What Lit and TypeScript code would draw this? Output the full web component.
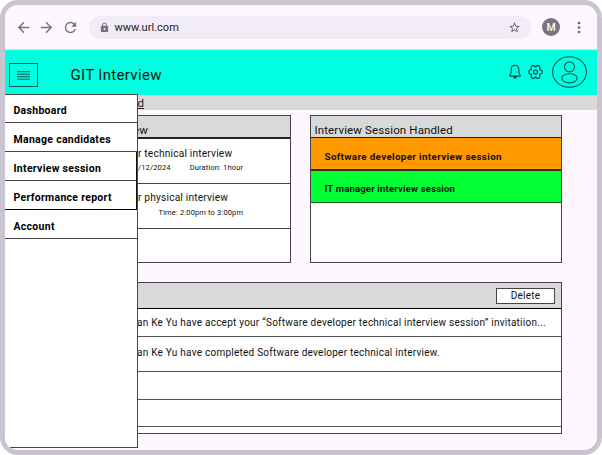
import { LitElement, html, css } from "lit";
import { customElement } from "lit/decorators.js";

@customElement("browser-bar")
class BrowserBar extends LitElement {
  static styles = css`
    :host { display: flex; height: 45px; box-sizing: border-box; align-items: center; background: #fef7ff; border-bottom: 1px solid #d5e6ea; }
    .nav { display: flex; width: 84px; box-sizing: border-box; padding-left: 10px; gap: 6.4px; }
    .nav svg { display: block; }
    .pill { display: flex; align-items: center; width: 442px; height: 23px; border-radius: 12px; background: #f2ecf7; }
    .lock { margin-left: 9.5px; }
    .url { flex: 1; margin-left: 5px; font-size: 11px; letter-spacing: 0.02px; color: #1d1b20; }
    .star { margin-right: 10px; }
    .avatar { display: flex; align-items: center; justify-content: center; width: 18px; height: 18px; margin-left: 11px; border-radius: 50%; background: #79747e; color: #fff; font-size: 10.5px; font-weight: 500; }
    .dots { margin-left: 16.5px; }
  `;
  render() {
    return html`
      <div class="nav">
        <svg width="17" height="17" viewBox="0 0 24 24" fill="#77717b"><path d="M20 11H7.83l5.59-5.59L12 4l-8 8 8 8 1.41-1.41L7.83 13H20v-2z" /></svg>
        <svg width="17" height="17" viewBox="0 0 24 24" fill="#77717b"><path d="M12 4l-1.41 1.41L16.17 11H4v2h12.17l-5.58 5.59L12 20l8-8z" /></svg>
        <svg width="17" height="17" viewBox="0 0 24 24" fill="#77717b"><path d="M17.65 6.35A7.96 7.96 0 0 0 12 4a8 8 0 1 0 7.73 10h-2.08A6 6 0 1 1 12 6c1.66 0 3.14.69 4.22 1.78L13 11h7V4l-2.35 2.35z" /></svg>
      </div>
      <div class="pill">
        <svg class="lock" width="11" height="11" viewBox="0 0 24 24" fill="#79747e"><path d="M18 8h-1V6A5 5 0 0 0 7 6v2H6a2 2 0 0 0-2 2v10c0 1.1.9 2 2 2h12a2 2 0 0 0 2-2V10a2 2 0 0 0-2-2zM9 6a3 3 0 0 1 6 0v2H9V6zm3 11a2 2 0 1 1 0-4 2 2 0 0 1 0 4z" /></svg>
        <span class="url">www.url.com</span>
        <svg class="star" width="13" height="13" viewBox="0 0 24 24" fill="#66616a"><path d="M22 9.24l-7.19-.62L12 2 9.19 8.63 2 9.24l5.46 4.73L5.82 21 12 17.27 18.18 21l-1.63-7.03L22 9.24zM12 15.4l-3.76 2.27 1-4.28-3.32-2.88 4.38-.38L12 6.1l1.71 4.04 4.38.38-3.32 2.88 1 4.28L12 15.4z" /></svg>
      </div>
      <span class="avatar">M</span>
      <svg class="dots" width="4" height="13" viewBox="0 0 4 13" fill="#66616a"><circle cx="2" cy="2" r="1.3" /><circle cx="2" cy="6.5" r="1.3" /><circle cx="2" cy="11" r="1.3" /></svg>
    `;
  }
}

@customElement("app-header")
class AppHeader extends LitElement {
  static styles = css`
    :host { display: flex; height: 46px; box-sizing: border-box; align-items: flex-start; background: #00ffe1; border-bottom: 1px solid #bfdcd8; }
    .burger { display: flex; align-items: center; justify-content: center; width: 29px; height: 24px; box-sizing: border-box; margin: 13px 0 0 4px; border: 1px solid #085a54; }
    .title { flex: 1; margin: 16px 0 0 32.5px; font-size: 15px; line-height: 18px; letter-spacing: 0.33px; color: #061413; }
    .bell { margin: 14px 1px 0 0; }
    .gear { margin: 14px 0 0 6px; }
    .user { margin: 6px 10px 0 9px; }
    svg { display: block; }
  `;
  render() {
    return html`
      <div class="burger">
        <svg width="13" height="9" viewBox="0 0 13 9" stroke="#085a54" stroke-width="1.1"><path d="M0 .8H13M0 3.2H13M0 5.7H13M0 8.2H13" /></svg>
      </div>
      <div class="title">GIT Interview</div>
      <svg class="bell" width="12" height="16" viewBox="0 0 12 16" fill="none" stroke="#064742" stroke-width="1.1" stroke-linejoin="round"><path d="M6 1.3C3.6 1.3 2.2 3 2.2 5.3V8.6L.8 11.2V12.1H11.2V11.2L9.8 8.6V5.3C9.8 3 8.4 1.3 6 1.3Z" /><path d="M4.4 12.4Q6 15.8 7.6 12.4Z" fill="#064742" /></svg>
      <svg class="gear" width="15" height="16" viewBox="0 0 15 16" fill="none" stroke="#064742" stroke-width="1.1" stroke-linejoin="round"><path d="M4.3 1.6H6L7.5 3 9 1.6H10.7L12 3.5 11.5 5.3 14.1 6.8V9.2L11.5 10.5 12 12.5 10.7 14.4H9L7.5 13 6 14.4H4.3L3 12.5 3.5 10.5 .9 9.2V6.8L3.5 5.3 3 3.5Z" /><circle cx="7.5" cy="8" r="2" /></svg>
      <svg class="user" width="35" height="32" viewBox="0 0 35 32" fill="none" stroke="#06544e" stroke-width="1.1"><ellipse cx="17.5" cy="16" rx="16.9" ry="15.3" /><circle cx="17.5" cy="10.9" r="5" /><ellipse cx="17.5" cy="22.3" rx="7.7" ry="4.6" /></svg>
    `;
  }
}

@customElement("nav-drawer")
class NavDrawer extends LitElement {
  static styles = css`
    :host { display: block; box-sizing: border-box; background: #fff; border: 1px solid #444; border-left: 0; }
    .item { display: flex; align-items: center; height: 29px; box-sizing: border-box; padding: 5px 0 0 8.5px; border-bottom: 1px solid #444; font-size: 10.5px; font-weight: 700; letter-spacing: 0.29px; white-space: nowrap; color: #000; }
    .first { height: 28px; padding-top: 4px; }
    .thick { border-right: 1px solid #111; }
    .dark { border-bottom-color: #000; }
  `;
  render() {
    return html`
      <div class="item first">Dashboard</div>
      <div class="item">Manage candidates</div>
      <div class="item thick">Interview session</div>
      <div class="item thick dark">Performance report</div>
      <div class="item">Account</div>
    `;
  }
}

@customElement("app-root")
class AppRoot extends LitElement {
  static styles = css`
    :host { display: block; width: 602px; height: 455px; background: #fff; font-family: Roboto, sans-serif; }
    .frame { position: relative; display: flex; flex-direction: column; width: 602px; height: 455px; box-sizing: border-box; border: 5px solid #cac4d0; border-radius: 18px; overflow: hidden; background: #fef7ff; }
    .drawer { position: absolute; left: 0; top: 89px; width: 133px; height: 354px; }
    .strip { height: 14px; box-sizing: border-box; padding-left: 132.5px; background: #d9d9d9; font-size: 11.5px; line-height: 15px; color: #222; text-decoration: underline; }
    .panels { display: flex; gap: 19px; margin: 5px 35px 0 132px; height: 148px; }
    .panel { box-sizing: border-box; border: 1px solid #444; background: #fff; color: #111; white-space: nowrap; }
    .panel.left { width: 154px; border-left: 0; }
    .panel.right { width: 252px; }
    .head { display: flex; align-items: flex-end; height: 23px; box-sizing: border-box; background: #d9d9d9; border-bottom: 2px solid #222; font-size: 11.5px; line-height: 14px; letter-spacing: 0.12px; }
    .left .head span { margin-left: -4px; }
    .right .head { height: 22px; padding-left: 3.5px; border-bottom-width: 1px; }
    .slot { display: flex; flex-direction: column; height: 45px; box-sizing: border-box; border-bottom: 1px solid #444; padding: 8.5px 0 0 1px; gap: 3px; }
    .slot.second { padding-top: 7.5px; gap: 4px; }
    .name { font-size: 10.2px; line-height: 12px; letter-spacing: 0.18px; }
    .meta { display: flex; font-size: 7.5px; line-height: 9px; letter-spacing: 0.15px; gap: 19px; }
    .time { padding-left: 20.5px; }
    .session { display: flex; align-items: center; box-sizing: border-box; padding: 5px 0 0 13.5px; height: 33px; font-size: 9.8px; font-weight: 700; letter-spacing: 0.35px; color: #111; }
    .orange { background: #ff9900; border-bottom: 2px solid #3b2c10; }
    .green { height: 32px; font-size: 9.5px; letter-spacing: 0.19px; padding-top: 4px; background: #00ff33; border-bottom: 1px solid #145c22; }
    .inbox { width: 425px; height: 152px; margin: 19px 0 0 132px; border-left: 0; }
    .bar { display: flex; justify-content: flex-end; align-items: flex-start; height: 26px; box-sizing: border-box; padding: 5px 6px 0 0; background: #d9d9d9; border-bottom: 1px solid #000; }
    .delete { width: 59px; height: 16px; box-sizing: border-box; padding: 0; border: 1px solid #444; background: #fff; font: 10px/14px Roboto, sans-serif; letter-spacing: 0.25px; color: #111; }
    .msg { height: 28px; box-sizing: border-box; border-bottom: 1px solid #555; padding-top: 8px; font-size: 10px; line-height: 12px; letter-spacing: 0.24px; }
    .tall { height: 35px; padding-top: 9.5px; }
    .short { height: 28px; }
    .last { height: 27px; }
  `;
  render() {
    return html`
      <div class="frame">
        <browser-bar></browser-bar>
        <app-header></app-header>
        <div class="strip">d</div>
        <div class="panels">
          <section class="panel left">
            <div class="head"><span>ew</span></div>
            <div class="slot">
              <div class="name">r technical interview</div>
              <div class="meta"><span>/12/2024</span><span>Duration: 1hour</span></div>
            </div>
            <div class="slot second">
              <div class="name">r physical interview</div>
              <div class="meta"><span class="time">Time: 2:00pm to 3:00pm</span></div>
            </div>
          </section>
          <section class="panel right">
            <div class="head">Interview Session Handled</div>
            <div class="session orange">Software developer interview session</div>
            <div class="session green">IT manager interview session</div>
          </section>
        </div>
        <section class="panel inbox">
          <div class="bar"><button class="delete">Delete</button></div>
          <div class="msg">an Ke Yu have accept your “Software developer technical interview session” invitatiion...</div>
          <div class="msg tall">an Ke Yu have completed Software developer technical interview.</div>
          <div class="msg short"></div>
          <div class="msg last"></div>
        </section>
        <nav-drawer class="drawer"></nav-drawer>
      </div>
    `;
  }
}
